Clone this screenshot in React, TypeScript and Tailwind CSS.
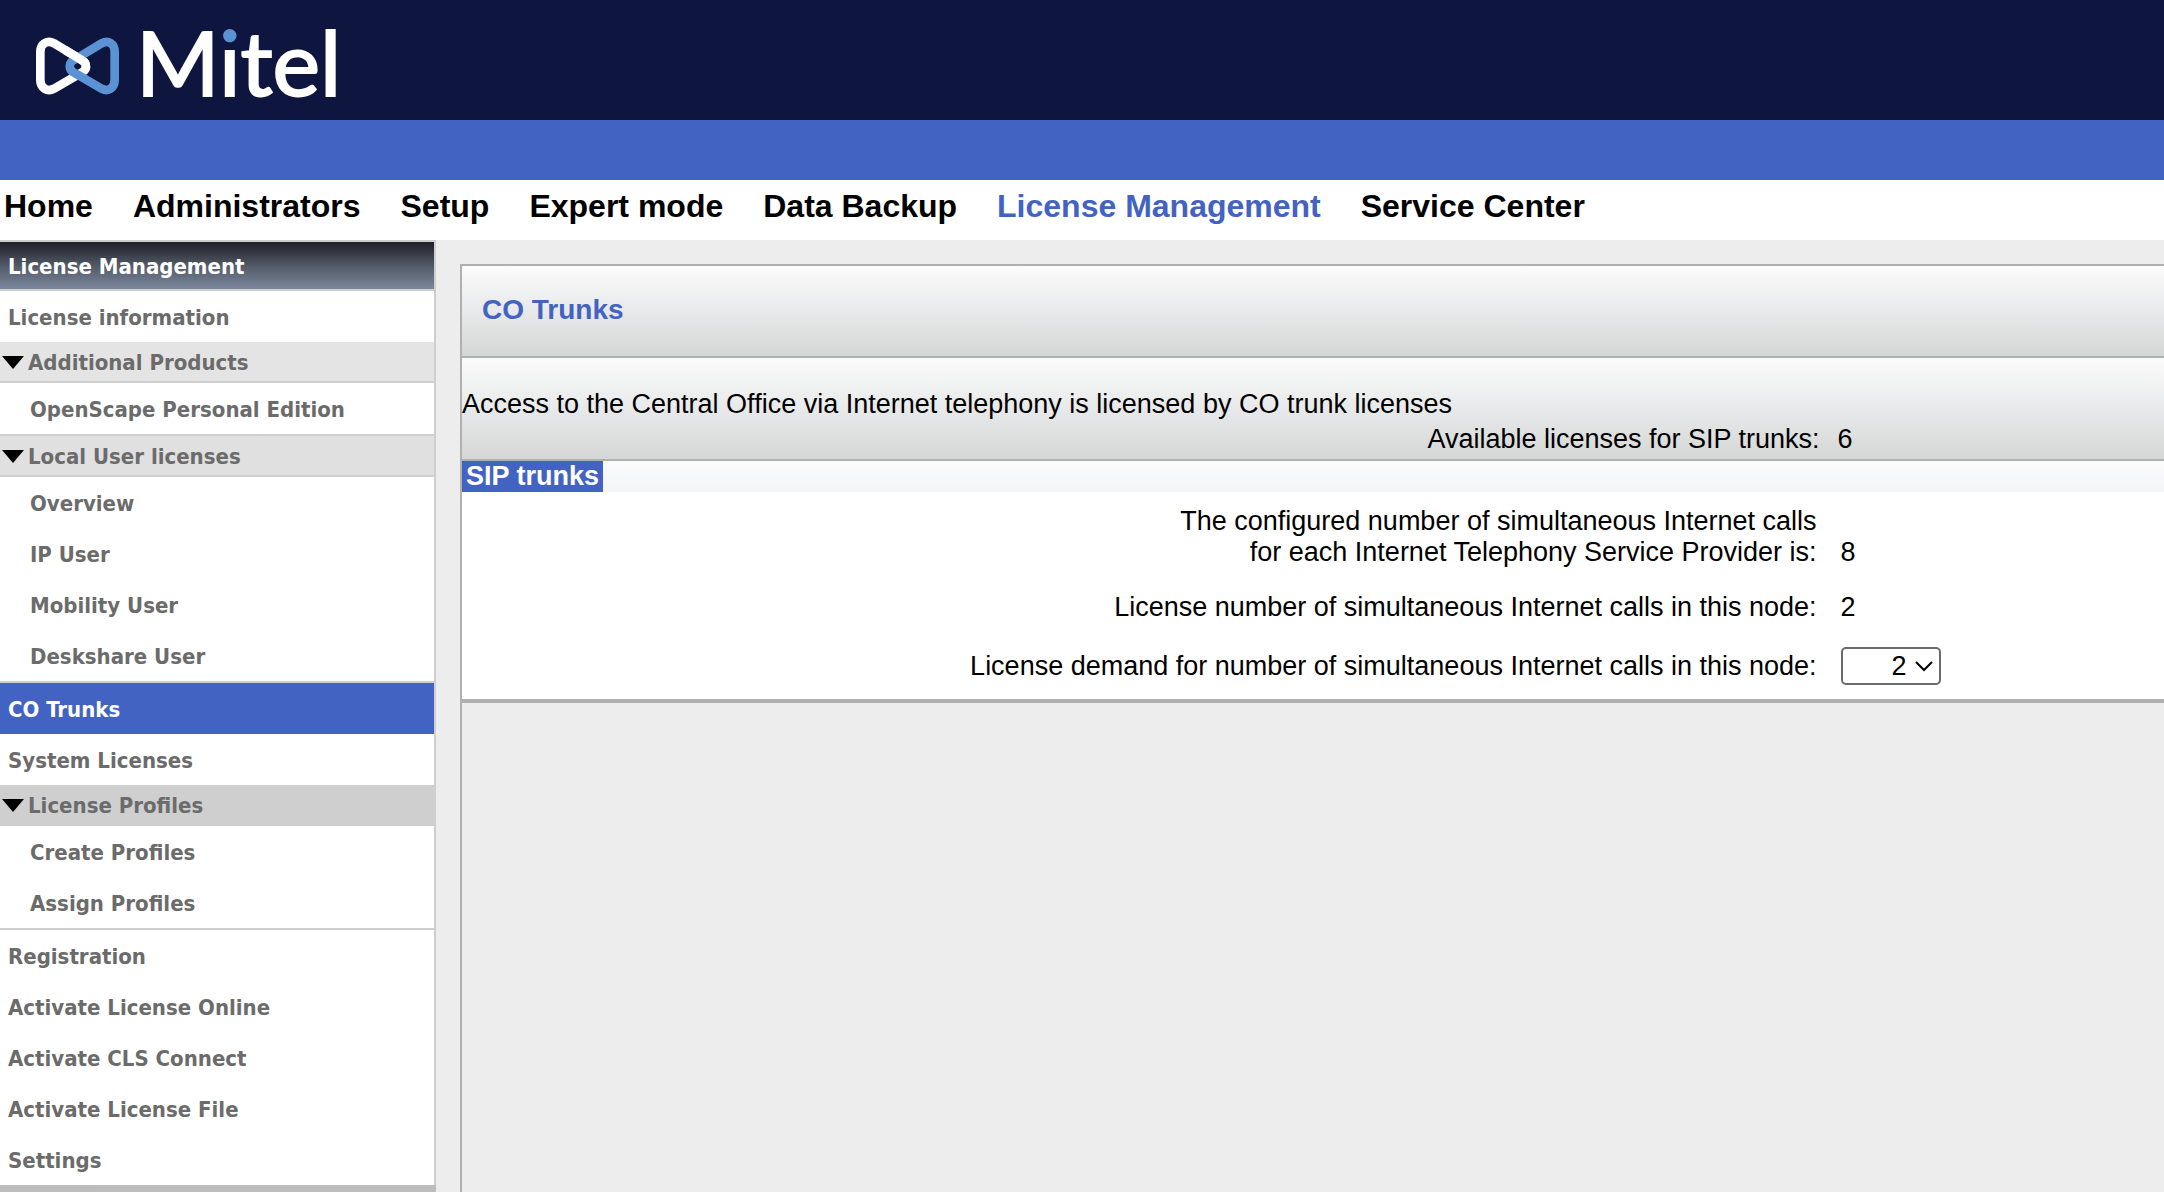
import React, { useState } from 'react';

interface NavItem {
  label: string;
  kind?: 'group' | 'child' | 'active';
  className?: string;
}

const TABS = ['Home', 'Administrators', 'Setup', 'Expert mode', 'Data Backup', 'License Management', 'Service Center'];

const NAV: NavItem[] = [
  { label: 'License information' },
  { label: 'Additional Products', kind: 'group', className: 'bg-[#e4e4e4]' },
  { label: 'OpenScape Personal Edition', kind: 'child', className: 'border-b-2' },
  { label: 'Local User licenses', kind: 'group', className: 'bg-[#e0e0e0]' },
  { label: 'Overview', kind: 'child' },
  { label: 'IP User', kind: 'child' },
  { label: 'Mobility User', kind: 'child' },
  { label: 'Deskshare User', kind: 'child', className: 'border-b-2' },
  { label: 'CO Trunks', kind: 'active' },
  { label: 'System Licenses' },
  { label: 'License Profiles', kind: 'group', className: 'bg-[#cfcfcf]' },
  { label: 'Create Profiles', kind: 'child' },
  { label: 'Assign Profiles', kind: 'child', className: 'border-b-2' },
  { label: 'Registration' },
  { label: 'Activate License Online' },
  { label: 'Activate CLS Connect' },
  { label: 'Activate License File' },
  { label: 'Settings' },
];

const Logo: React.FC = () => (
  <a href="#" className="flex items-center text-white">
    <svg viewBox="108 108 252 180" className="w-[84px] h-[60px] mt-3" fill="none" strokeWidth="26">
      <path
        d="M121 155V240C121 264 142 277 162 266L248 216C261 208 261 190 248 182L162 130C142 119 121 131 121 155Z"
        stroke="white"
      />
      <path
        d="M344 155V240C344 264 325 277 305 266L219 216C206 208 206 190 219 182L305 130C325 119 344 131 344 155Z"
        stroke="#5b92d4"
      />
      <path d="M195 150L248 182C258 188 260 200 256 208" stroke="white" />
    </svg>
    <span className="mt-0.5 ml-4 text-[90px] leading-[120px] font-['Lato',sans-serif] [-webkit-text-stroke:2px]">
      M
      <span className="bg-linear-to-b from-[#5b92d4] from-33% to-white to-33% bg-clip-text text-transparent">i</span>
      tel
    </span>
  </a>
);

const SideItem: React.FC<{ item: NavItem }> = ({ item }) => {
  if (item.kind === 'group') {
    return (
      <button
        className={`flex w-full items-center gap-1 border-b-2 border-[#cfcfcf] pt-0.5 pl-0.5 leading-[37px] font-bold text-[#6b6b6b] ${item.className}`}
      >
        <svg viewBox="0 0 22 13" className="w-[22px] h-[13px]">
          <path d="M0 0H22L11 13Z" fill="black" />
        </svg>
        {item.label}
      </button>
    );
  }
  const look =
    item.kind === 'active'
      ? 'pl-2 bg-[#4263c2] text-white'
      : `${item.kind === 'child' ? 'pl-[30px]' : 'pl-2'} text-[#6b6b6b]`;
  return (
    <a href="#" className={`block border-[#cfcfcf] pt-0.5 leading-[49px] font-bold ${look} ${item.className ?? ''}`}>
      {item.label}
    </a>
  );
};

const App: React.FC = () => {
  const [demand, setDemand] = useState('2');

  return (
    <div className="flex min-h-screen flex-col bg-[#ededed] font-['Liberation_Sans',Arial,sans-serif] text-[27px] leading-[31px] text-black">
      <header>
        <div className="flex h-[120px] overflow-hidden bg-[#0e153f] pl-9">
          <Logo />
        </div>
        <div className="h-[60px] bg-[#4263c2]" />
        <nav className="flex h-[60px] gap-10 bg-white pl-1 text-[32px] leading-[52px] font-bold whitespace-nowrap">
          {TABS.map(tab => (
            <a key={tab} href="#" className={tab === 'License Management' ? 'text-[#4263c2]' : ''}>
              {tab}
            </a>
          ))}
        </nav>
      </header>

      <div className="flex flex-1">
        <aside className="flex w-[436px] shrink-0 flex-col bg-[#bcbcbc] font-['DejaVu_Sans_Condensed','DejaVu_Sans',sans-serif] text-[22px]">
          <div className="border-t-2 border-r-2 border-[#cfcfcf] bg-white">
            <h2 className="border-b-2 border-[#cfcfcf] bg-linear-to-b from-[#1e2029] via-[#525966] to-[#7d889e] pt-0.5 pl-2 leading-[45px] font-bold text-white">
              License Management
            </h2>
            {NAV.map(item => <SideItem key={item.label} item={item} />)}
          </div>
        </aside>

        <main className="mt-6 ml-6 flex-1 border-t-2 border-l-2 border-[#b0b0b0]">
          <h1 className="border-b-2 border-[#b0b0b0] bg-linear-to-b from-[#fbfbfb] via-[#e8e9ea] to-[#d5d7d6] pl-5 pt-7 pb-[30px] text-[28px] leading-8 font-bold text-[#4263c2]">
            CO Trunks
          </h1>

          <section className="border-b-2 border-[#b0b0b0] bg-linear-to-b from-[#fbfbfb] via-[#e8e9ea] to-[#d5d7d6] pt-7 pb-0.5">
            <p className="leading-9">Access to the Central Office via Internet telephony is licensed by CO trunk licenses</p>
            <div className="flex leading-[35px]">
              <span className="w-4/5 pr-1 text-right">Available licenses for SIP trunks:</span>
              <span className="pl-[14px]">6</span>
            </div>
          </section>

          <section className="border-b-4 border-[#b0b0b0] bg-white">
            <h2 className="flex bg-linear-to-b from-[#fbfbfb] to-[#f4f5f8] font-bold text-white">
              <span className="bg-[#4263c2] px-1">SIP trunks</span>
            </h2>
            <table className="mt-[14px] w-full">
              <tbody>
                <tr>
                  <th className="w-4/5 pr-[7px] pb-3 text-right font-normal">
                    The configured number of simultaneous Internet calls
                    <br />
                    for each Internet Telephony Service Provider is:
                  </th>
                  <td className="pb-3 pl-[17px] align-bottom">8</td>
                </tr>
                <tr>
                  <th className="pr-[7px] py-3 text-right font-normal">License number of simultaneous Internet calls in this node:</th>
                  <td className="py-3 pl-[17px]">2</td>
                </tr>
                <tr>
                  <th className="pr-[7px] pt-3 pb-[14px] text-right font-normal">
                    <label htmlFor="demand">License demand for number of simultaneous Internet calls in this node:</label>
                  </th>
                  <td className="pt-3 pb-[14px] pl-[17px]">
                    <span className="relative block w-[100px]">
                      <select
                        id="demand"
                        value={demand}
                        onChange={e => setDemand(e.target.value)}
                        className="block h-[38px] w-full appearance-none rounded-[5px] border-2 border-[#6b6b6b] bg-white pr-8 text-right"
                      >
                        {['0', '1', '2', '3', '4', '5', '6'].map(n => <option key={n}>{n}</option>)}
                      </select>
                      <svg viewBox="0 0 18 11" className="pointer-events-none absolute top-[14px] right-2 h-[11px] w-[18px]">
                        <path d="M1 1L9 9L17 1" fill="none" stroke="black" strokeWidth="2" />
                      </svg>
                    </span>
                  </td>
                </tr>
              </tbody>
            </table>
          </section>
        </main>
      </div>
    </div>
  );
};

export default App;
